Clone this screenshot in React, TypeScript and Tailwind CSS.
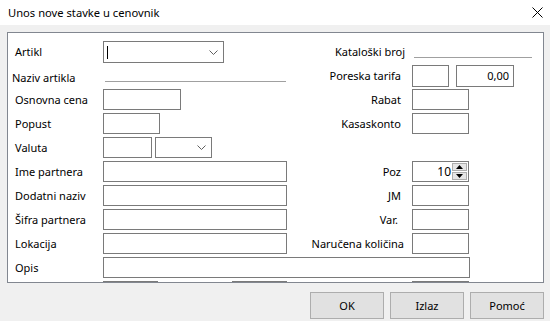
import type { ReactNode } from 'react';

function Chevron() {
  return (
    <svg width="9" height="5" viewBox="0 0 9 5" className="text-[#606060]">
      <path d="M0.5 0.5 L4.5 4.5 L8.5 0.5" fill="none" stroke="currentColor" strokeWidth="1" />
    </svg>
  );
}

function Box({ className = '', children }: { className?: string; children?: ReactNode }) {
  return <div className={`h-[21px] shrink-0 border border-[#7a7a7a] bg-white ${className}`}>{children}</div>;
}

function Combo({ className = '', cursor = false }: { className?: string; cursor?: boolean }) {
  return (
    <div className={`flex shrink-0 items-center border border-[#7a7a7a] bg-white ${className}`}>
      {cursor ? <span className="ml-[3px] h-[13px] w-px bg-black" /> : null}
      <span className="flex-1" />
      <span className="mr-[5px] flex items-center">
        <Chevron />
      </span>
    </div>
  );
}

function Spin({ value }: { value: string }) {
  return (
    <Box className="flex w-[57px] items-center">
      <span className="flex-1 pr-[1px] text-right text-[12px]">{value}</span>
      <div className="mr-px flex h-[19px] w-[15px] flex-col gap-px py-px">
        <div className="flex flex-1 items-center justify-center border border-[#adadad] bg-[#e5e5e5]">
          <svg width="7" height="4" viewBox="0 0 7 4">
            <path d="M0 4 L3.5 0 L7 4 Z" fill="#000" />
          </svg>
        </div>
        <div className="flex flex-1 items-center justify-center border border-[#adadad] bg-[#e5e5e5]">
          <svg width="7" height="4" viewBox="0 0 7 4">
            <path d="M0 0 L3.5 4 L7 0 Z" fill="#000" />
          </svg>
        </div>
      </div>
    </Box>
  );
}

function Row({
  label,
  left,
  rightLabel,
  right,
  labelPad = 'pr-[11px]',
}: {
  label: string;
  left: ReactNode;
  rightLabel?: string;
  right?: ReactNode;
  labelPad?: string;
}) {
  return (
    <div className="flex h-[24px] shrink-0 items-start">
      <div className="flex h-[21px] w-[283px] shrink-0 items-center">
        <span className="w-[95px] shrink-0 whitespace-nowrap pl-[7px]">{label}</span>
        {left}
      </div>
      {rightLabel !== undefined ? (
        <div className="flex h-[21px] items-center">
          <span className={`w-[121px] shrink-0 whitespace-nowrap text-right ${labelPad}`}>{rightLabel}</span>
          {right}
        </div>
      ) : null}
    </div>
  );
}

export default function App() {
  return (
    <div className="flex h-[321px] w-[550px] flex-col overflow-hidden bg-[#f0f0f0] font-['Segoe_UI','Noto_Sans',sans-serif] text-[11px] leading-[16px] text-black">
      <div className="flex h-[25px] shrink-0 items-center bg-white">
        <span className="pl-[8px] text-[11.2px]">Unos nove stavke u cenovnik</span>
        <span className="flex-1" />
        <svg width="11" height="11" viewBox="0 0 11 11" className="mr-[7px]">
          <path d="M0.5 0.5 L10.5 10.5 M10.5 0.5 L0.5 10.5" stroke="#000" strokeWidth="1" />
        </svg>
      </div>

      <div className="ml-[7px] mt-[7px] flex h-[251px] w-[537px] shrink-0 flex-col overflow-hidden border border-[#828790] bg-white">
        {/* gornji deo */}
        <div className="flex h-[56px] shrink-0 items-start">
          <div className="flex w-[283px] shrink-0 flex-col">
            <div className="mt-[8px] flex h-[22px] items-center">
              <span className="w-[95px] shrink-0 pl-[7px]">Artikl</span>
              <Combo className="h-[22px] w-[121px]" cursor />
            </div>
            <div className="flex h-[26px] items-start">
              <span className="mt-[7px] w-[97px] shrink-0 pl-[4px]">Naziv artikla</span>
              <div className="h-[19px] w-[181px] border-b border-[#a0a0a0]" />
            </div>
          </div>
          <div className="flex flex-col">
            <div className="mt-[8px] flex h-[17px] items-start">
              <span className="mt-[3px] w-[114px] shrink-0 text-right">Kataloški broj</span>
              <div className="ml-[9px] h-[17px] w-[118px] border-b border-[#a0a0a0]" />
            </div>
            <div className="mt-[7px] flex h-[22px] items-center">
              <span className="w-[121px] shrink-0 pr-[11px] text-right">Poreska tarifa</span>
              <div className="h-[22px] w-[37px] border border-[#7a7a7a]" />
              <div className="ml-[7px] flex h-[22px] w-[58px] items-center justify-end border border-[#7a7a7a] pr-[4px]">
                0,00
              </div>
            </div>
          </div>
        </div>

        <Row label="Osnovna cena" left={<Box className="w-[78px]" />} rightLabel="Rabat" right={<Box className="w-[57px]" />} />
        <Row label="Popust" left={<Box className="w-[57px]" />} rightLabel="Kasaskonto" right={<Box className="w-[57px]" />} />
        <Row
          label="Valuta"
          left={
            <>
              <Box className="w-[49px]" />
              <Combo className="ml-[3px] h-[21px] w-[57px]" />
            </>
          }
        />
        <Row label="Ime partnera" left={<Box className="w-[184px]" />} rightLabel="Poz" right={<Spin value="10" />} />
        <Row label="Dodatni naziv" left={<Box className="w-[184px]" />} rightLabel="JM" right={<Box className="w-[57px]" />} />
        <Row
          label="Šifra partnera"
          left={<Box className="w-[184px]" />}
          rightLabel="Var."
          labelPad="pr-[14px]"
          right={<Box className="w-[57px]" />}
        />
        <Row
          label="Lokacija"
          left={<Box className="w-[184px]" />}
          rightLabel="Naručena količina"
          labelPad="pr-[8px]"
          right={<Box className="w-[57px]" />}
        />
        <div className="flex h-[24px] shrink-0 items-start">
          <div className="flex h-[21px] items-center">
            <span className="w-[95px] shrink-0 pl-[7px]">Opis</span>
            <Box className="w-[367px]" />
          </div>
        </div>
        {/* sledeci red, vidi se samo ivica */}
        <div className="flex h-[21px] shrink-0 pl-[95px]">
          <Box className="w-[55px]" />
          <Box className="ml-[74px] w-[55px]" />
          <Box className="ml-[125px] w-[57px]" />
        </div>
      </div>

      <div className="mt-[9px] flex justify-end gap-[6px] pr-[6px]">
        {['OK', 'Izlaz', 'Pomoć'].map((t) => (
          <button
            key={t}
            type="button"
            className="flex h-[27px] w-[74px] items-center justify-center border border-[#adadad] bg-[#e1e1e1]"
          >
            {t}
          </button>
        ))}
      </div>
    </div>
  );
}
